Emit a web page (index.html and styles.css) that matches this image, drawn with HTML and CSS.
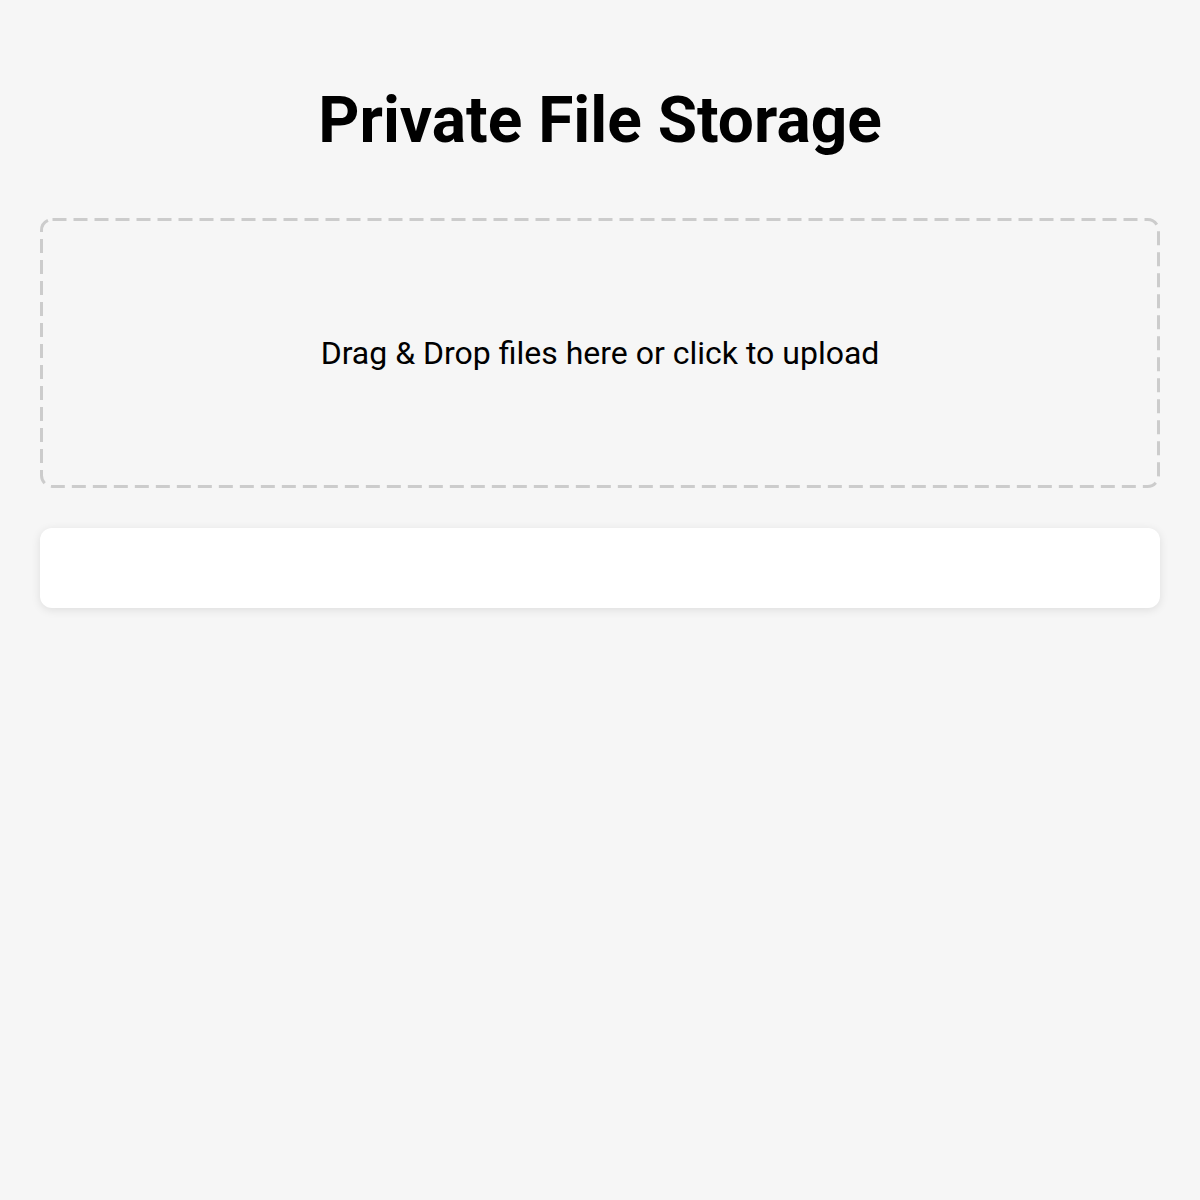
FILE: index.html
```html
<!DOCTYPE html>
<html lang="en">
  <head>
    <meta charset="UTF-8" />
    <meta name="viewport" content="width=device-width, initial-scale=1.0" />
    <title>Private File Storage</title>
    <link rel="stylesheet" href="styles.css">
  </head>
  <body>
    <div class="container">
      <h1>Private File Storage</h1>
      <div class="drop-zone">
        <svg class="drop-border" aria-hidden="true">
          <rect></rect>
        </svg>
        <p>Drag &amp; Drop files here or click to upload</p>
      </div>
      <div class="file-list"></div>
    </div>
  </body>
</html>
```

FILE: styles.css
```css
* {
  margin: 0;
  padding: 0;
  box-sizing: border-box;
}

body {
  background-color: #f6f6f6;
  font-family: Roboto, "Liberation Sans", sans-serif;
  color: #000;
}

.container {
  padding: 40px;
}

h1 {
  font-size: 64px;
  font-weight: 700;
  text-align: center;
  margin: 43px 0 60px;
}

.drop-zone {
  position: relative;
  height: 270px;
  border-radius: 12px;
  display: flex;
  align-items: center;
  justify-content: center;
  cursor: pointer;
}

/* dashed outline, longer dashes than the default border */
.drop-border {
  position: absolute;
  top: 0;
  left: 0;
  width: 100%;
  height: 100%;
  pointer-events: none;
}

.drop-border rect {
  x: 1.5px;
  y: 1.5px;
  width: calc(100% - 3px);
  height: calc(100% - 3px);
  rx: 11px;
  fill: none;
  stroke: #cccccc;
  stroke-width: 3;
  stroke-dasharray: 14 7;
}

.drop-zone p {
  font-size: 32px;
}

.file-list {
  margin-top: 40px;
  height: 80px;
  background-color: #fff;
  border-radius: 12px;
  box-shadow: 0 2px 10px rgba(0, 0, 0, 0.1);
}
```
